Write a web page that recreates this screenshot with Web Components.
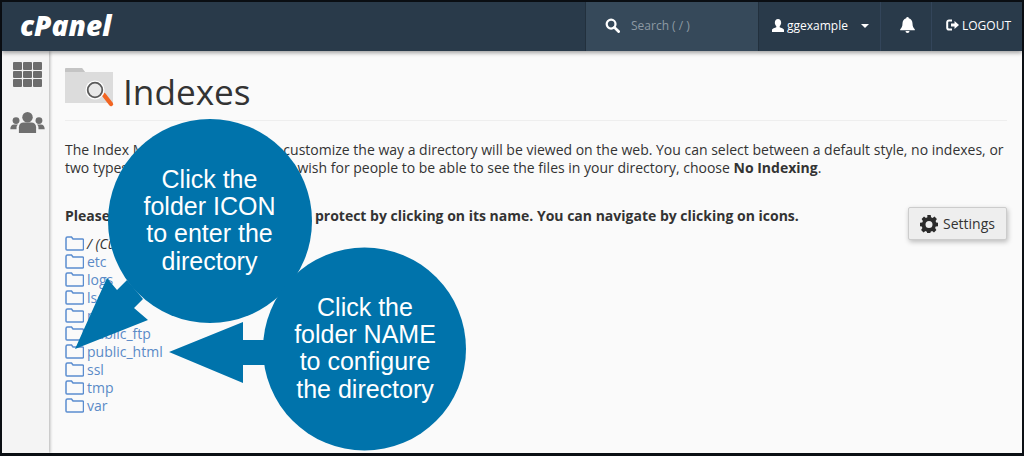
<!DOCTYPE html>
<html><head><meta charset="utf-8"><style>
html,body{margin:0;padding:0;width:1024px;height:456px;overflow:hidden;background:#0b0f14}
</style></head><body>
<cp-app>
<cp-topbar slot="top"></cp-topbar>
<cp-rail slot="rail"></cp-rail>
<cp-page slot="main">
<cp-title>Indexes</cp-title>
<p>The Index Manager allows you to customize the way a directory will be viewed on the web. You can select between a default style, no indexes, or two types of indexing. If you do not wish for people to be able to see the files in your directory, choose <b>No Indexing</b>.</p>
<cp-picker>
<span slot="lead">Please select the folder you wish to protect by clicking on its name. You can navigate by clicking on icons.</span>
<cp-dir current>/ (Current Folder)</cp-dir>
<cp-dir>etc</cp-dir><cp-dir>logs</cp-dir><cp-dir>lscache</cp-dir><cp-dir>mail</cp-dir><cp-dir>public_ftp</cp-dir><cp-dir>public_html</cp-dir><cp-dir>ssl</cp-dir><cp-dir>tmp</cp-dir><cp-dir>var</cp-dir>
</cp-picker>
</cp-page>
</cp-app>
<cp-callouts></cp-callouts>
<script>
function def(name,css,html){customElements.define(name,class extends HTMLElement{constructor(){super();this.attachShadow({mode:'open'}).innerHTML='<style>'+css+'</style>'+html}})}
const F='"Open Sans","Noto Sans",sans-serif';
def('cp-app',`:host{display:grid;grid-template-columns:47px 1fr;grid-template-rows:49px 402px;width:1020px;height:451px;border:solid #0b0f14;border-width:2px 2px 3px 2px;font:14px/18px ${F};color:#333;background:#fafafa}
.t{grid-column:1/3;display:block;position:relative;z-index:2}`,`<div class="t"><slot name="top"></slot></div><slot name="rail"></slot><slot name="main"></slot>`);
def('cp-topbar',`:host{display:flex;height:49px;background:#293a4a;box-shadow:0 2px 4px rgba(0,0,0,.35);color:#fff;font:12px ${F}}
svg{display:block}
.logo{margin:8px 0 0 18px;font:italic 800 28px/30px "Open Sans",sans-serif;letter-spacing:0;height:30px}
.sp{flex:1}
.s{flex:0 0 174px;display:flex;align-items:center;background:#36495a;border-left:1px solid #22303d;border-right:1px solid #22303d;box-sizing:border-box;padding:0 0 2px 19px;gap:11px;color:#8d99a3}
.u{flex:0 0 122px;display:flex;align-items:center;box-sizing:border-box;padding:0 0 2px 13px;border-right:1px solid #33455a;gap:3px}
.c{width:0;height:0;border:4px solid transparent;border-top-color:#fff;border-bottom:0;margin-left:10px}
.b{flex:0 0 51px;display:flex;justify-content:center;align-items:center;border-right:1px solid #33455a;box-sizing:border-box;padding:0 0 3px 2px}
.l{flex:0 0 90px;display:flex;align-items:center;box-sizing:border-box;padding:0 0 3px 14px;gap:3px}`,
`<div class="logo">cPanel</div><div class="sp"></div>
<div class="s"><svg width="15" height="15" viewBox="0 0 16 16"><circle cx="6.500" cy="6.500" r="4.700" fill="none" stroke="#fff" stroke-width="2.400"/><path d="M10 10l4.500 4.500" stroke="#fff" stroke-width="3" stroke-linecap="round"/></svg><span>Search ( / )</span></div>
<div class="u"><svg width="12" height="13" viewBox="0 0 14 15" fill="#fff"><path d="M7 0c2.200 0 3.700 1.800 3.700 4.200 0 1.500-.7 3-1.700 3.800v1.500c1.500.8 5 1.300 5 3.500v2H0v-2c0-2.200 3.500-2.700 5-3.500V8C4 7.200 3.300 5.700 3.300 4.200 3.300 1.800 4.800 0 7 0z"/></svg><span>ggexample</span><i class="c"></i></div>
<div class="b"><svg width="15" height="16" viewBox="0 0 15 16" fill="#fff"><path d="M7.500 0a1.300 1.300 0 0 1 1.300 1.300C11.300 2 12.500 4 12.500 6.500c0 3 1 4.500 2.300 5.800v.9H.2v-.9C1.500 11 2.500 9.500 2.500 6.500 2.500 4 3.700 2 6.200 1.300A1.300 1.300 0 0 1 7.500 0z"/><path d="M5.500 14h4a2 2 0 0 1-4 0z"/></svg></div>
<div class="l"><svg width="13" height="12" viewBox="0 0 13 12"><path d="M6 1.500H3A1.800 1.800 0 0 0 1.200 3.300v5.400A1.800 1.800 0 0 0 3 10.500h3" fill="none" stroke="#fff" stroke-width="2"/><path d="M5 4.500h3.500V2L13 6l-4.500 4V7.500H5z" fill="#fff"/></svg><span>LOGOUT</span></div>`);
def('cp-rail',`:host{display:flex;flex-direction:column;align-items:center;position:relative;z-index:1;background:#f4f4f4;box-shadow:1px 0 3px rgba(0,0,0,.3);padding:11px 0 0 4px;gap:25px;box-sizing:border-box;width:47px}
.g{display:grid;grid-template-columns:repeat(3,9px);grid-auto-rows:7.670px;gap:1px}.g i{background:#6d6d6d;border-radius:1px}
svg{display:block}`,
`<div class="g">${'<i></i>'.repeat(9)}</div><svg width="35" height="21" viewBox="0 0 36 22" fill="#6f6f6f"><circle cx="18" cy="5.500" r="5.500"/><path d="M9 22v-6c0-3 2-5 5-5h8c3 0 5 2 5 5v6z"/><circle cx="6" cy="9" r="3.600"/><path d="M0 18c0-3 1.500-5 4-5h4c-1 1-1.500 2-1.500 3.500V18z"/><circle cx="30" cy="9" r="3.600"/><path d="M36 18c0-3-1.500-5-4-5h-4c1 1 1.500 2 1.500 3.500V18z"/></svg>`);
def('cp-page',`:host{display:block;padding:17px 15px 0 16px;min-width:0;font:14px/18px ${F};color:#333;background:#fafafa}
::slotted(p){margin:20px 0 0;line-height:18px}`,`<slot></slot>`);
def('cp-title',`:host{display:flex;height:50px;border-bottom:1px solid #eee;padding-bottom:2px;gap:10px;margin:0}
svg{display:block;align-self:flex-start;overflow:visible}
h1{margin:1px 0 0;font:400 35.200px/44px ${F};color:#333}`,
`<svg width="48" height="40" viewBox="0 0 48 40"><path d="M0 0h17l3 4h28v31H0z" fill="#dcdcdc"/><path d="M1 0h16l3 4H0V1z" fill="#c4c4c4"/><path d="M39 27l7 9" stroke="#f26522" stroke-width="4.400" stroke-linecap="round"/><circle cx="30" cy="22" r="9.500" fill="#fff"/><circle cx="30" cy="22" r="7.300" fill="#e9e9e9" stroke="#5a5a5a" stroke-width="1.800"/></svg><h1><slot></slot></h1>`);
def('cp-picker',`:host{display:block;margin-top:30px;position:relative}
.lead{font-weight:700;color:#333;display:block;margin-bottom:10px}
.btn{position:absolute;right:0;top:0;width:99px;height:33px;box-sizing:border-box;background:#eee;border:1px solid #ccc;border-radius:2px;box-shadow:1px 2px 5px rgba(0,0,0,.25);display:flex;align-items:center;justify-content:center;gap:5px;color:#333}
svg{display:block}`,
`<div class="lead"><slot name="lead"></slot></div><div class="btn"><svg width="18" height="18" viewBox="0 0 18 18"><path fill="#2b2b2b" fill-rule="evenodd" d="M7.300 0h3.400l.4 2.300 1.500.6 1.900-1.300 2.400 2.400-1.300 1.900.6 1.500L18 7.800v3.400l-2.300.4-.6 1.500 1.300 1.900-2.400 2.400-1.900-1.300-1.500.6-.4 2.300H7.300l-.4-2.300-1.500-.6-1.900 1.300-2.400-2.400 1.300-1.900-.6-1.500L0 11.200V7.800l2.300-.4.600-1.500-1.300-1.900 2.400-2.400 1.900 1.300 1.500-.6zM9 6a3.500 3.500 0 1 0 0 7 3.500 3.500 0 0 0 0-7z"/></svg><span>Settings</span></div><slot></slot>`);
customElements.define('cp-dir',class extends HTMLElement{constructor(){super();const cur=this.hasAttribute('current');this.attachShadow({mode:'open'}).innerHTML=`<style>:host{display:flex;align-items:center;height:18px;gap:3px;color:#5b8ac7}
span{${cur?'font-style:italic;font-weight:400;color:#333':''}}svg{display:block;margin-bottom:2px}</style><svg width="19" height="15" viewBox="0 0 19 15"><path d="M1 3V2.500A1.500 1.500 0 0 1 2.500 1h4L8 3h9.500A1 1 0 0 1 18.500 4v9a1 1 0 0 1-1 1H2a1 1 0 0 1-1-1z" fill="none" stroke="#5b8dd0" stroke-width="1.500"/></svg><span><slot></slot></span>`}});
def('cp-callouts',`:host{position:absolute;left:0;top:0;width:1024px;height:456px;display:block;pointer-events:none}
svg{position:absolute;left:0;top:0}
.b{position:absolute;color:#fff;font:25px/27.200px "Liberation Sans",Arial,sans-serif;text-align:center;white-space:nowrap;transform:translateX(-50%)}`,
`<svg width="1024" height="456"><g fill="#0073ab">
<circle cx="210" cy="221" r="102"/><path d="M75 349L107 278L117 290L127 280L143 299L134 308L148 320z"/>
<circle cx="364.500" cy="349" r="101.500"/><path d="M270 340H243V322L169 352L243 383V365H270z"/></g></svg>
<div class="b" style="left:209.500px;top:166px">Click the<br>folder ICON<br>to enter the<br>directory</div>
<div class="b" style="left:365px;top:294px">Click the<br>folder NAME<br>to configure<br>the directory</div>`);
</script>
</body></html>
